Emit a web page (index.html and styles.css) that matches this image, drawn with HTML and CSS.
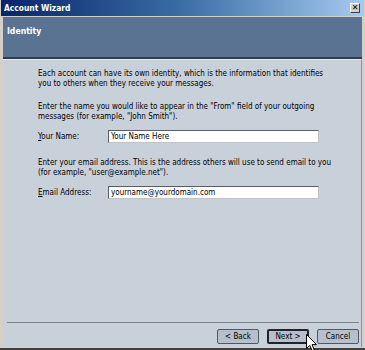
FILE: index.html
```html
<!DOCTYPE html>
<html lang="en">
<head>
    <meta charset="UTF-8">
    <title>Account Wizard</title>
    <link rel="stylesheet" href="styles.css">
</head>
<body>
    <div class="window">
        <div class="titlebar">
            <span class="title">Account Wizard</span>
            <span class="close">&#x2715;</span>
        </div>
        <div class="page-header">Identity</div>
        <div class="page-body">
            <div class="content">
                <p>Each account can have its own identity, which is the information that identifies<br>you to others when they receive your messages.</p>
                <p class="gap">Enter the name you would like to appear in the "From" field of your outgoing<br>messages (for example, "John Smith").</p>
                <div class="field">
                    <label for="your-name"><u>Y</u>our Name:</label>
                    <input type="text" id="your-name" value="Your Name Here">
                </div>
                <p class="gap-lg">Enter your email address. This is the address others will use to send email to you<br>(for example, "user@example.net").</p>
                <div class="field">
                    <label for="email"><u>E</u>mail Address:</label>
                    <input type="text" id="email" value="yourname@yourdomain.com">
                </div>
            </div>
            <div class="footer">
                <button>&lt; Back</button>
                <button class="default">Next &gt;</button>
                <button>Cancel</button>
            </div>
        </div>
        <svg class="cursor" width="12" height="18" viewBox="0 0 12 18">
            <path d="M0.5 0.5 L0.5 14.5 L3.8 11.4 L6.2 16.8 L8.3 15.9 L6 10.6 L10.5 10.6 Z" fill="#fff" stroke="#000" stroke-width="1"/>
        </svg>
    </div>
</body>
</html>
```

FILE: styles.css
```css
html, body {
    margin: 0;
    padding: 0;
}
body {
    font-family: "DejaVu Sans Condensed", "DejaVu Sans", sans-serif;
    font-size: 8px;
    color: #000;
}
.window {
    position: relative;
    width: 365px;
    height: 350px;
    box-sizing: border-box;
    background-color: #d4d0c8;
    border-bottom: 2px solid #404040;
    display: flex;
    flex-direction: column;
}
.titlebar {
    height: 16px;
    margin: 0 1px;
    background: linear-gradient(to right, #0a246a, #3a6ea5 50%, #a6caf0);
    display: flex;
    align-items: center;
    justify-content: space-between;
    padding: 0 4px 0 3px;
}
.title {
    color: white;
    font-weight: bold;
    font-size: 8.4px;
}
.close {
    width: 10px;
    height: 10px;
    background-color: #d4d0c8;
    border: 1px solid;
    border-color: #fff #404040 #404040 #fff;
    font-family: "DejaVu Sans", sans-serif;
    font-size: 8px;
    font-weight: bold;
    line-height: 8px;
    text-align: center;
    box-sizing: border-box;
}
.page-header {
    margin: 1px 3px 0 3px;
    height: 42px;
    box-sizing: border-box;
    background-color: #5b7393;
    border-bottom: 2px solid #2e3c50;
    color: white;
    font-weight: bold;
    font-size: 8.6px;
    padding: 9px 4px;
}
.page-body {
    flex: 1;
    margin: 0 3px 1px 3px;
    background-color: #c8d0da;
    border-top: 1px solid #e4e8ee;
    border-right: 1px solid #8c949e;
    display: flex;
    flex-direction: column;
}
.content {
    flex: 1;
    padding: 9px 0 0 35px;
}
.content p {
    margin: 0;
    line-height: 10px;
    white-space: nowrap;
}
.content p.gap {
    margin-top: 13px;
}
.content p.gap-lg {
    margin-top: 15px;
}
.field {
    display: flex;
    align-items: center;
    margin-top: 8px;
}
.field label {
    width: 70px;
}
.field input {
    width: 211px;
    height: 13px;
    box-sizing: border-box;
    border: 1px solid #5a5e64;
    border-right-color: #c0c4c8;
    border-bottom-color: #c0c4c8;
    padding: 0 2px;
    font-family: "DejaVu Sans Condensed", "DejaVu Sans", sans-serif;
    font-size: 8px;
    background: white;
}
.footer {
    margin: 0 2px 0 4px;
    border-top: 1px solid #7c8490;
    display: flex;
    justify-content: flex-end;
    gap: 8px;
    padding: 6px 0 3px 0;
}
.footer button {
    width: 42px;
    height: 15px;
    padding: 0;
    background-color: #b6bfcb;
    border: 1px solid #505864;
    border-radius: 2px;
    font-family: "DejaVu Sans Condensed", "DejaVu Sans", sans-serif;
    font-size: 8px;
    color: #000;
}
.footer button.default {
    border: 2px solid #202428;
}
.cursor {
    position: absolute;
    left: 306px;
    top: 334px;
}
```
